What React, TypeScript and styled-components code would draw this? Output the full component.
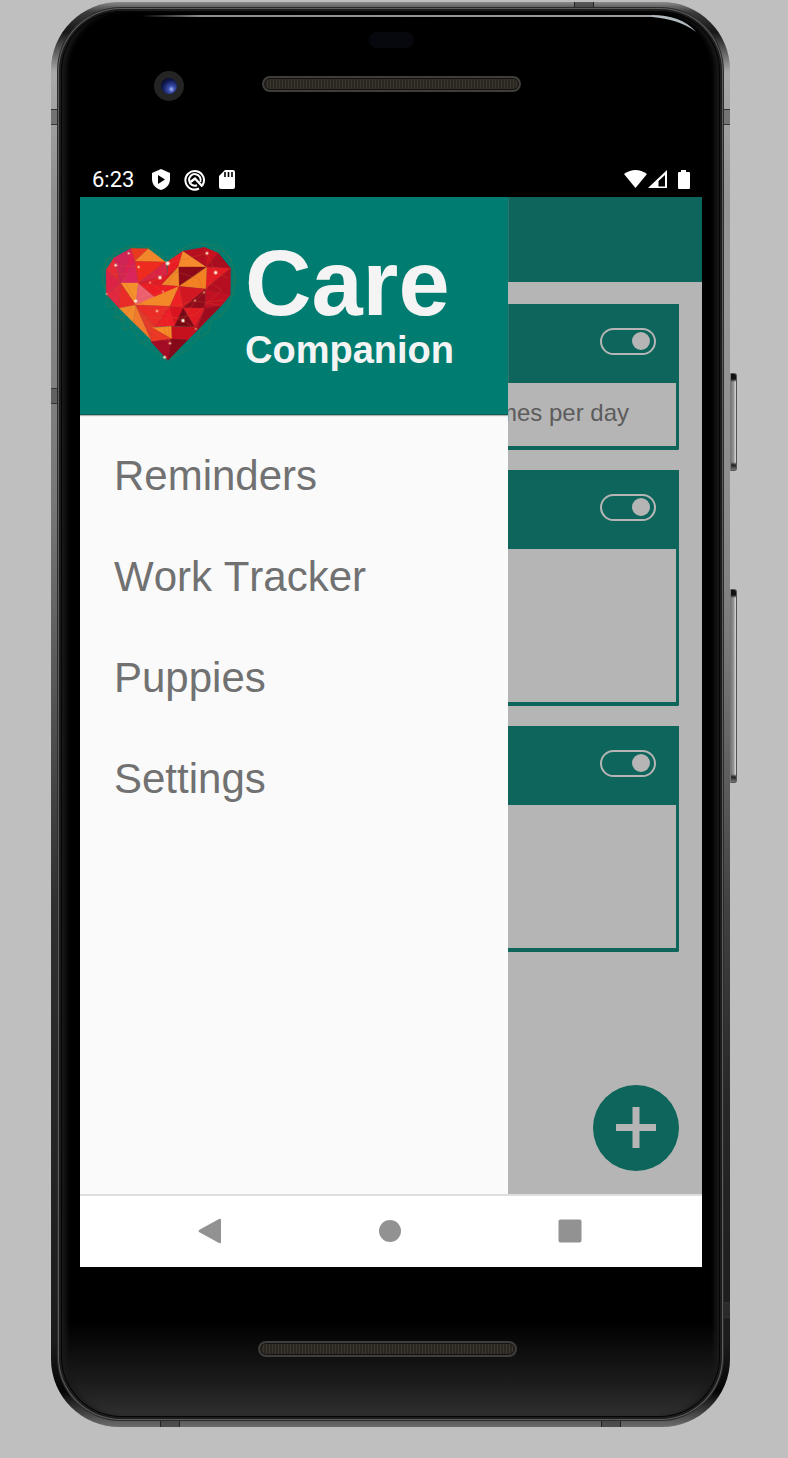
import React from "react";
import styled, { createGlobalStyle } from "styled-components";

const GlobalStyle = createGlobalStyle`
  * { box-sizing: border-box; }
  body { margin: 0; background: #bfbfbf; font-family: "Liberation Sans", Arial, sans-serif; font-kerning: none; }
  button { border: 0; padding: 0; background: none; font: inherit; cursor: pointer; }
  svg { display: block; }
`;

const Page = styled.div`
  padding: 2px 58px 31px 51px;
`;

const Phone = styled.div`
  position: relative;
  padding: 9px 10px 10px;
  border-radius: 68px;
  background:
    linear-gradient(180deg, transparent 60px, rgba(190, 190, 190, 0.3) 300px, rgba(190, 190, 190, 0.3) 600px, transparent 1100px) 100% 0 / 12px 100% no-repeat,
    linear-gradient(180deg, #8a8a8a 0, #3c3c3c 10px, #161616 30px, #aaa 70px, #8c8c8c 200px, #777 500px, #303030 900px, #1c1c1c 1340px, #050505 1390px, #6a6a6a 1424px);
`;

const Bezel = styled.div`
  position: relative;
  padding: 0 18px 0 19px;
  border-radius: 60px;
  background: linear-gradient(180deg, #000 0, #000 1310px, #1b1b1b 1370px, #303030 100%);
  box-shadow: inset 0 0 0 1px #050505, inset 7px 0 5px -2px #1a1a1a, inset -7px 0 5px -2px #1a1a1a, 0 0 0 2px #1c1c1c, 0 0 0 3px #5c5c5c, 0 0 0 4px #2c2c2c;
`;

const Glare = styled.div`
  position: absolute;
  top: 4px;
  left: 80px;
  right: 24px;
  display: flex;
`;

const GlareLine = styled.div`
  flex: 1;
  height: 2px;
  background: linear-gradient(90deg, #000, #8b8d92 60px, #9b9da2);
`;

const Forehead = styled.div`
  display: flex;
  flex-direction: column;
  align-items: center;
  height: 152px;
  padding-top: 21px;
`;

const Sensor = styled.div`
  width: 45px;
  height: 16px;
  border-radius: 8px;
  background: #07080d;
`;

const CameraRow = styled.div`
  display: grid;
  grid-template-columns: 1fr auto 1fr;
  align-items: start;
  width: 100%;
  margin-top: 23px;
`;

const Camera = styled.div`
  width: 30px;
  height: 30px;
  margin-left: 74px;
  border: 7px solid #252424;
  border-radius: 50%;
  background: radial-gradient(circle at 65% 70%, #a8b8f4 0, #3c4fae 20%, #121c58 55%, #05071a 85%);
`;

const Speaker = styled.div`
  width: 259px;
  height: 16px;
  margin-top: 5px;
  border: 2px solid #3f3d3b;
  border-radius: 8px;
  background: repeating-linear-gradient(90deg, #3c372e 0, #3c372e 1px, #2a2620 1px, #2a2620 3px);
  box-shadow: inset 0 0 0 1px #151413;
`;

const Chin = styled.div`
  display: flex;
  justify-content: center;
  height: 150px;
  padding: 69px 8px 0 0;
`;

const SideKey = styled.div<{ $top: number; $length: number }>`
  position: absolute;
  left: 100%;
  top: ${(p) => p.$top}px;
  width: 7px;
  height: ${(p) => p.$length}px;
  border: 1px solid #555;
  border-left-color: #777;
  border-radius: 0 3px 3px 0;
  background: linear-gradient(180deg, #111 0, #111 5px, transparent 8px, transparent calc(100% - 8px), #222 calc(100% - 5px), #777), linear-gradient(90deg, #777 0, #999 3px, #ccc 4px);
`;

const Seam = styled.div<{ $side: "left" | "right"; $top: number }>`
  position: absolute;
  ${(p) => p.$side}: 0;
  top: ${(p) => p.$top}px;
  width: 9px;
  height: 16px;
  border: solid #333;
  border-width: 1px 0;
  background: rgba(60, 60, 60, 0.45);
`;

const EdgeSeam = styled.div<{ $edge: "top" | "bottom"; $left: string }>`
  position: absolute;
  ${(p) => p.$edge}: 0;
  left: ${(p) => p.$left};
  width: 20px;
  height: 8px;
  border: solid #222;
  border-width: 0 1px;
  background: rgba(60, 60, 60, 0.6);
`;

const Screen = styled.div`
  background: #000;
`;

const StatusBar = styled.header`
  display: flex;
  align-items: center;
  justify-content: space-between;
  height: 34px;
  padding: 0 11px 0 12px;
  color: #fff;
  font: 22px/34px Roboto, sans-serif;
`;

const StatusGroup = styled.div<{ $gap: number }>`
  display: flex;
  align-items: center;
  gap: ${(p) => p.$gap}px;
`;

const Clock = styled.span`
  padding-right: 4px;
`;

const Viewport = styled.div`
  position: relative;
  min-height: 997px;
  overflow: hidden;
  background: #b5b5b5;
`;

const AppBar = styled.div`
  height: 85px;
  background: #0e655b;
`;

const CardList = styled.main`
  display: flex;
  flex-direction: column;
  gap: 20px;
  padding: 22px 23px;
`;

const Card = styled.section<{ $height: number }>`
  display: flex;
  flex-direction: column;
  min-height: ${(p) => p.$height}px;
  border: solid #0e655b;
  border-width: 0 3px 4px;
  border-radius: 0 0 2px 2px;
`;

const CardHeader = styled.div`
  display: flex;
  align-items: center;
  justify-content: flex-end;
  height: 79px;
  padding: 0 20px 4px 0;
  background: #0e655b;
`;

const Toggle = styled.input`
  appearance: none;
  display: flex;
  align-items: center;
  justify-content: flex-end;
  width: 56px;
  height: 27px;
  margin: 0;
  padding: 0 4px 1px 0;
  border: 2px solid #b5b5b5;
  border-radius: 14px;

  &::after {
    content: "";
    width: 18px;
    height: 18px;
    border-radius: 50%;
    background: #b5b5b5;
  }
`;

const CardText = styled.p`
  margin: 0;
  padding: 0 47px 0 0;
  color: #5c5c5c;
  font-size: 24px;
  line-height: 60px;
  text-align: right;
`;

const AddButton = styled.button`
  position: absolute;
  right: 23px;
  bottom: 23px;
  width: 86px;
  height: 86px;
  border-radius: 50%;
  background: #0e655b;
`;

const Drawer = styled.aside`
  position: absolute;
  inset: 0 auto 0 0;
  width: 428px;
  max-width: 100%;
  background: #fafafa;
`;

const Brand = styled.div`
  display: flex;
  align-items: flex-start;
  gap: 5px;
  height: 218px;
  padding: 38px 0 0 15px;
  background: #007d70;
  border-bottom: 1px solid #0a5c53;
  box-shadow: 0 1px 1px #b0b5b4;
`;

const BrandName = styled.h1`
  margin: 0;
  color: #f4f4f4;
  font-size: 92px;
  line-height: 96px;
`;

const BrandSub = styled.span`
  display: block;
  font-size: 38px;
  line-height: 38px;
`;

const Menu = styled.nav`
  display: flex;
  flex-direction: column;
  padding: 10px 0 0 34px;
`;

const MenuLink = styled.a`
  color: #717171;
  font-size: 42px;
  line-height: 101px;
  text-decoration: none;
`;

const NavBar = styled.footer`
  display: flex;
  align-items: center;
  justify-content: center;
  gap: 156px;
  height: 73px;
  padding: 0 2px 2px 0;
  border-top: 2px solid #dedede;
  background: #fff;
`;

const facets: [string, string][] = [
  ["33,105 57,68 77,144", "#e32a35"],
  ["57,68 108,40 77,144", "#cf2456"],
  ["108,40 120,79 77,144", "#de1f50"],
  ["120,79 130,144 77,144", "#d9255c"],
  ["108,40 160,41 120,79", "#e93a20"],
  ["160,41 212,81 120,79", "#f3852b"],
  ["120,79 212,81 130,144", "#ee2b1e"],
  ["212,81 218,120 130,144", "#d92446"],
  ["218,80 264,48 250,96 218,120", "#ea1d26"],
  ["218,120 250,96 200,150 130,144", "#df1b28"],
  ["264,48 335,96 250,96", "#f58a2c"],
  ["264,48 328,37 335,96", "#b50f20"],
  ["328,37 370,54 335,96", "#c9101f"],
  ["370,54 407,100 335,96", "#a80e20"],
  ["335,96 407,100 332,162", "#e21b25"],
  ["407,100 406,180 332,162", "#b50e21"],
  ["250,96 335,96 252,154", "#8b0918"],
  ["335,96 332,162 252,154", "#f28124"],
  ["250,96 252,154 200,150", "#f08927"],
  ["33,105 77,144 34,178", "#dc2346"],
  ["34,178 77,144 73,220", "#e0283e"],
  ["77,144 130,144 122,210", "#f5912d"],
  ["77,144 122,210 73,220", "#e92c28"],
  ["130,144 182,188 122,210", "#ee6171"],
  ["130,144 200,150 252,154 182,188", "#ec1c25"],
  ["122,210 252,154 225,214", "#f38828"],
  ["252,154 332,162 265,218", "#d01722"],
  ["252,154 265,218 225,214", "#ee2225"],
  ["332,162 330,220 265,218", "#8f0c1c"],
  ["332,162 406,180 379,212 330,220", "#c01022"],
  ["73,220 122,210 115,262", "#f18c2c"],
  ["122,210 115,262 168,314", "#f27a2c"],
  ["122,210 180,276 168,314", "#e23b2a"],
  ["122,210 225,214 180,276", "#ea2c28"],
  ["225,214 240,272 180,276", "#ee1c26"],
  ["225,214 265,218 240,272", "#d9131f"],
  ["265,218 300,276 240,272", "#7e0918"],
  ["265,218 330,220 300,276", "#e01b24"],
  ["330,220 379,212 300,293", "#9d0c1e"],
  ["330,220 300,293 300,276", "#c4121f"],
  ["172,278 230,274 231,312", "#f58c26"],
  ["172,278 231,312 168,320", "#eb3824"],
  ["230,274 300,276 300,293 278,315 231,312", "#c5111e"],
  ["168,320 231,312 219,376", "#a40b25"],
  ["231,312 278,315 219,376", "#850918"],
];

const sparkles: [number, number, number][] = [
  [218, 85, 5], [195, 128, 4], [362, 113, 4], [62, 91, 3], [122, 198, 4], [264, 257, 4],
  [209, 367, 3], [336, 55, 3], [101, 55, 2], [131, 96, 2], [186, 228, 2], [165, 143, 1],
  [225, 325, 2], [327, 173, 1], [303, 282, 1], [204, 170, 1], [35, 177, 1], [300, 197, 1],
];

function HeartLogo() {
  return (
    <svg width="145" height="135" viewBox="0 0 435 405" aria-hidden="true">
      <g fill="none" stroke="#6c7a32" strokeWidth="1.5" opacity="0.6">
        <path d="M20 130 35 75 80 42 125 32 170 38 222 76 252 45 303 24 375 33 410 78 421 130 410 190 382 241 345 258 342 290 305 312 278 345 214 375 160 336 136 322 110 276 84 284 88 256 61 247 64 215H38V178L20 130" />
        <path d="M35 75 72 66M410 78 388 50 350 38M421 130 400 160M382 241 340 230 305 312M61 247 100 235 110 276M240 58 252 45M136 322 170 310" />
        <path d="M28 158 18 105 48 58 105 34M418 105 423 155 398 215M282 325 255 357" strokeDasharray="3 5" />
      </g>
      {facets.map(([points, fill]) => (
        <polygon key={points} points={points} fill={fill} stroke={fill} strokeWidth="1" />
      ))}
      <path d="M264 222 240 272 278 272zM335 98 300 120 252 154z" fill="#6d0714" opacity="0.55" />
      <g fill="none" stroke="#d8572b" strokeWidth="1.5" opacity="0.55">
        <path d="M62 91 131 96 195 128 165 143 204 170 122 198 186 228 264 257 303 282M195 128 218 85 336 55 362 113 327 173 300 197 264 257M122 198 77 260M225 325 186 228 300 197 379 212M362 113 400 130M165 143 122 198 62 91M218 250 170 290 225 325" />
        <path d="M204 170 240 110 310 130 327 173M45 120 100 115 62 165 100 200M217 252 300 240 340 200 385 195M150 245 217 252 225 325M340 140 380 165 340 200" />
      </g>
      {sparkles.map(([x, y, r]) => (
        <g key={`${x}-${y}`}>
          <circle cx={x} cy={y} r={r + 3} fill="#ffc48e" opacity="0.4" />
          <circle cx={x} cy={y} r={r} fill="#fff" opacity="0.85" />
        </g>
      ))}
    </svg>
  );
}

const reminders = [
  { name: "First reminder", height: 146, text: "3 times per day" },
  { name: "Second reminder", height: 236, text: "" },
  { name: "Third reminder", height: 226, text: "" },
];

export default function App() {
  return (
    <Page>
      <GlobalStyle />
      <Phone>
        <SideKey $top={371} $length={98} />
        <SideKey $top={587} $length={194} />
        <Seam $side="left" $top={107} />
        <Seam $side="left" $top={386} />
        <Seam $side="right" $top={107} />
        <Seam $side="right" $top={1300} />
        <EdgeSeam $edge="top" $left="77%" />
        <EdgeSeam $edge="bottom" $left="16%" />
        <EdgeSeam $edge="bottom" $left="81%" />
        <Bezel>
          <Glare>
            <GlareLine />
            <svg width="44" height="18" viewBox="0 0 44 18" aria-hidden="true">
              <path d="M0 0C18 0 34 5 44 17 31 7 18 4 0 2z" fill="#b2bbc0" />
            </svg>
          </Glare>
          <Forehead>
            <Sensor />
            <CameraRow>
              <Camera />
              <Speaker />
            </CameraRow>
          </Forehead>
          <Screen>
            <StatusBar>
              <StatusGroup $gap={12}>
                <Clock>6:23</Clock>
                <svg width="22" height="22" viewBox="0 0 22 22" aria-hidden="true">
                  <path d="M11 0 20 4v6c0 5-3 9-9 11-6-2-9-6-9-11V4z" fill="#fff" />
                  <path d="M8 6v9l7-4.500z" fill="#000" />
                </svg>
                <svg width="22" height="22" viewBox="0 0 22 22" aria-hidden="true">
                  <g fill="none" stroke="#fff" strokeWidth="2">
                    <path d="M15 19.500A9.300 9.300 0 1 1 18.500 16.300" />
                    <path d="M13 16.300A5.800 5.800 0 1 1 16.300 13" />
                    <path d="m6.500 13 4.500-3.500 7.500 8" strokeWidth="2.400" />
                  </g>
                </svg>
                <svg width="18" height="22" viewBox="0 0 18 22" aria-hidden="true">
                  <path d="M7 1h8q2 0 2 2v15q0 2-2 2H3q-2 0-2-2V7z" fill="#fff" />
                  <path d="M7 3v5M10.500 3v5M14 3v5" stroke="#000" strokeWidth="1.600" />
                </svg>
              </StatusGroup>
              <StatusGroup $gap={1}>
                <svg width="23" height="20" viewBox="0 0 23 20" aria-hidden="true">
                  <path d="M0 4Q11.500-4 23 4L11.500 18z" fill="#fff" />
                </svg>
                <svg width="28" height="20" viewBox="0 0 28 20" aria-hidden="true">
                  <path d="M0 18 19 0v18zM10.500 11V16.500H17V5z" fill="#fff" fillRule="evenodd" />
                </svg>
                <svg width="14" height="20" viewBox="0 0 14 20" aria-hidden="true">
                  <path d="M4 0h5v2h3q1 0 1 1v15q0 1-1 1H2q-1 0-1-1V3q0-1 1-1h2z" fill="#fff" />
                </svg>
              </StatusGroup>
            </StatusBar>
            <Viewport>
              <AppBar />
              <CardList>
                {reminders.map((r) => (
                  <Card key={r.name} $height={r.height}>
                    <CardHeader>
                      <Toggle type="checkbox" role="switch" defaultChecked aria-label={r.name} />
                    </CardHeader>
                    {r.text && <CardText>{r.text}</CardText>}
                  </Card>
                ))}
              </CardList>
              <AddButton aria-label="Add reminder">
                <svg width="86" height="86" viewBox="0 0 86 86" aria-hidden="true">
                  <path d="M43 22v41M23 42.500h40" stroke="#b5b5b5" strokeWidth="7" />
                </svg>
              </AddButton>
              <Drawer>
                <Brand>
                  <HeartLogo />
                  <BrandName>
                    Care
                    <BrandSub>Companion</BrandSub>
                  </BrandName>
                </Brand>
                <Menu>
                  <MenuLink href="#reminders">Reminders</MenuLink>
                  <MenuLink href="#work-tracker">Work Tracker</MenuLink>
                  <MenuLink href="#puppies">Puppies</MenuLink>
                  <MenuLink href="#settings">Settings</MenuLink>
                </Menu>
              </Drawer>
            </Viewport>
            <NavBar>
              <button aria-label="Back">
                <svg width="24" height="26" viewBox="0 0 24 26">
                  <path d="M21 1q2-1 2 1v22q0 2-2 1L1 14q-1-1 0-2z" fill="#929292" />
                </svg>
              </button>
              <button aria-label="Home">
                <svg width="24" height="24" viewBox="0 0 24 24">
                  <circle cx="12" cy="12" r="11" fill="#929292" />
                </svg>
              </button>
              <button aria-label="Overview">
                <svg width="24" height="24" viewBox="0 0 24 24">
                  <rect x="0.500" y="0.500" width="23" height="23" rx="2" fill="#929292" />
                </svg>
              </button>
            </NavBar>
          </Screen>
          <Chin>
            <Speaker />
          </Chin>
        </Bezel>
      </Phone>
    </Page>
  );
}
